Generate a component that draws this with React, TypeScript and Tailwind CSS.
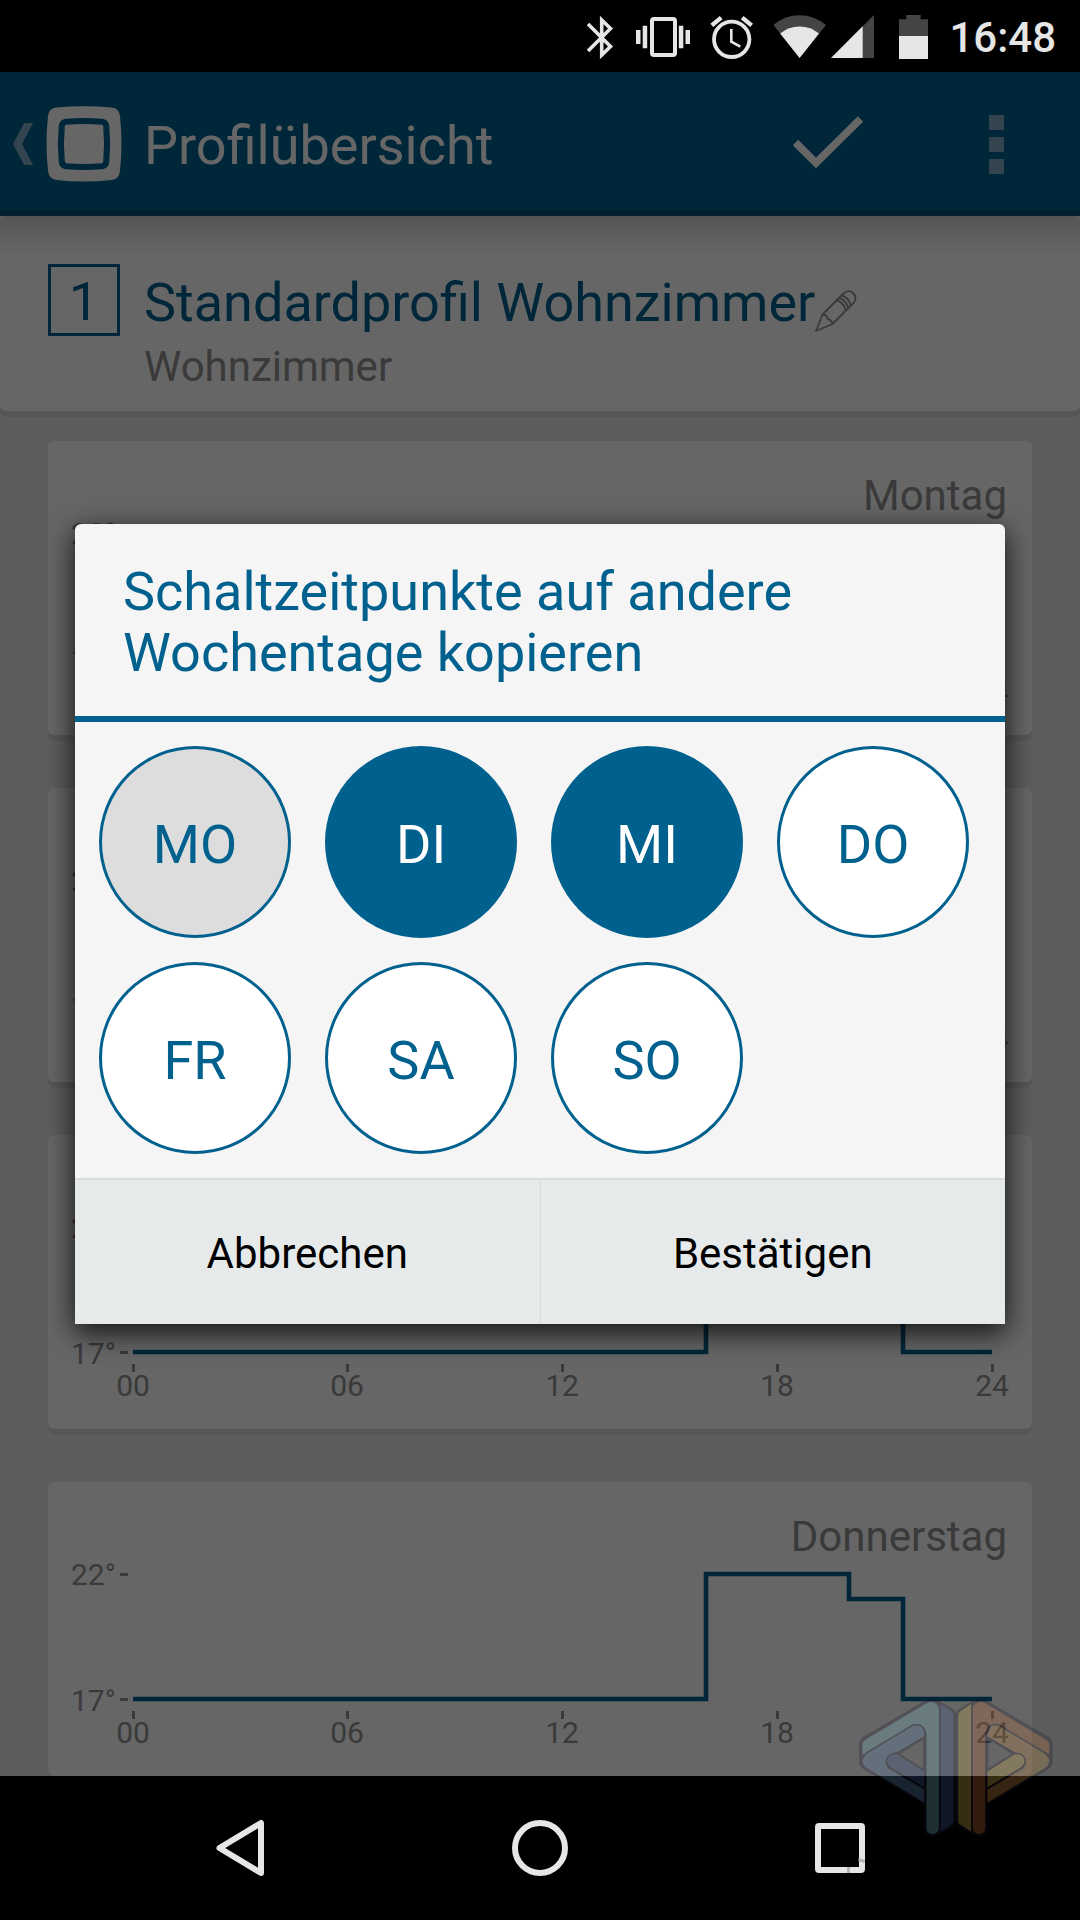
import { useState } from "react";
import clsx from "clsx";

const days = ["Montag", "Dienstag", "Mittwoch", "Donnerstag"];
const weekdays = ["MO", "DI", "MI", "DO", "FR", "SA", "SO"];

// Time axis labels and their centre in the chart
const hours = [
  { label: "00", x: 85 },
  { label: "06", x: 299 },
  { label: "12", x: 514 },
  { label: "18", x: 729 },
  { label: "24", x: 944 },
];

function StatusBar() {
  return (
    <div className="flex h-[72px] items-center justify-end gap-5 bg-black pt-0.5 pr-6 text-[#e6e6e6]">
      {/* Bluetooth */}
      <svg width="32" height="48" viewBox="0 0 32 48" fill="none" stroke="currentColor" strokeWidth="3.6">
        <path d="M4 11 26.5 33.5 17.7 42V7L26.5 15.5 4 38" />
      </svg>
      {/* Vibrate */}
      <svg width="54" height="48" viewBox="0 0 54 48" fill="currentColor">
        <rect x="16" y="6" width="23" height="36" rx="2" fill="none" stroke="currentColor" strokeWidth="4" />
        <path d="M0 17h4.5v14H0zM6.7 12.7h4.5v22.6H6.7zM42.8 12.7h4.5v22.6h-4.5zM49.5 17H54v14h-4.5z" />
      </svg>
      {/* Alarm */}
      <svg width="44" height="48" viewBox="0 0 44 48" fill="none" stroke="currentColor">
        <circle cx="21.7" cy="26.3" r="17.7" strokeWidth="3.8" />
        <path d="M21.3 16v12.7l9 5" strokeWidth="2.6" />
        <path d="M1.8 12.4 11.2 4.6M32.2 4.6l9.4 7.8" strokeWidth="4.4" />
      </svg>
      <div className="flex gap-1">
        {/* Wifi */}
        <svg width="52" height="48" viewBox="0 0 52 48" fill="currentColor">
          <path d="M-.5 12Q11 2.2 25.6 2.2T52 12L25.6 45z" fill="#444" />
          <path d="M6.2 20.5Q14.6 13.5 25.6 13.5T45 20.5L25.6 45z" />
        </svg>
        {/* Signal */}
        <svg width="48" height="48" viewBox="0 0 48 48" fill="currentColor">
          <path d="M1 45 44 2v43z" fill="#444" />
          <path d="M1 45 32.7 13.3V45z" />
        </svg>
      </div>
      {/* Battery */}
      <svg width="31" height="48" viewBox="0 0 31 48" fill="currentColor">
        <path d="M1 6.3h7.3V2h14.4v4.3H30V24H1z" fill="#444" />
        <path d="M1 23h29v23H1z" />
      </svg>
      <span className="pt-0.5 text-[42px] leading-[48px] font-medium">16:48</span>
    </div>
  );
}

function ActionBar() {
  return (
    <header className="flex h-36 items-center border-b-6 border-[#005078] bg-[#00618f] pt-1.5">
      <button aria-label="Zurück" className="mr-5 flex w-[124px] items-center justify-end gap-[13px] pr-0.5">
        <svg width="20" height="42" viewBox="0 0 20 42" fill="#80aac3">
          <path d="M11 0h9L9 21l11 21h-9L0 21z" />
        </svg>
        <svg width="76" height="76" viewBox="0 0 75 75">
          <path
            d="M10 1.500Q37-1 65 1.500q7 .8 8 8Q76 37 73 64.500q-1 8-8 8.500Q37 76 10 73q-7-.8-8-8.500Q-1 37 2 9.500q.8-7 8-8z"
            fill="#fff"
          />
          <path
            d="M20 15.500q17.500-1.500 35 0 4 .3 4.500 4.500 1.500 17.500 0 35-.4 4-4.500 4.500-17.500 1.500-35 0-4-.3-4.500-4.500-1.500-17.500 0-35 .4-4 4.500-4.500z"
            fill="#fff"
            stroke="#00618f"
            strokeWidth="6"
          />
        </svg>
      </button>
      <h1 className="flex-1 pt-1 text-[54px] leading-[66px] text-white">Profilübersicht</h1>
      <button aria-label="Speichern" className="flex w-[168px] justify-center">
        <svg width="72" height="56" viewBox="0 0 72 56" fill="none" stroke="#fff" strokeWidth="7.5">
          <path d="M3.500 26.500 24 47 68.500 3" />
        </svg>
      </button>
      <button aria-label="Weitere Optionen" className="flex w-[168px] flex-col items-center gap-[7px]">
        <span className="size-[15px] bg-[#80aac3]" />
        <span className="size-[15px] bg-[#80aac3]" />
        <span className="size-[15px] bg-[#80aac3]" />
      </button>
    </header>
  );
}

function ProfileHeader() {
  return (
    <section className="flex gap-6 rounded-[6px] bg-linear-to-b from-[#d4d4d4] to-white to-20% px-12 pt-12 pb-5 shadow-[0_6px_0_#d8d8d8]">
      <span className="flex size-[72px] items-center justify-center border-3 border-[#00618f] pt-1 text-[54px] leading-[66px] text-[#00618f]">
        1
      </span>
      <div className="pt-1.5">
        <div className="flex items-end">
          <h2 className="text-[54px] leading-[66px] text-[#00618f]">Standardprofil Wohnzimmer</h2>
          <button aria-label="Profil umbenennen" className="pb-1">
            <svg width="42" height="42" viewBox="0 0 42 42" fill="none" stroke="#919191" strokeWidth="1.8" strokeLinejoin="round">
              <path d="M1 41 7.500 24.500 28.500 3.500q5-4.500 9.500-.5t1 9.500L17.500 34z" />
              <path d="M7.500 24.500q4.500 0 5 4.500 4 .5 5 5M21.500 10.500q7 1.500 9 9.500M24 8q7 1.500 9 9.500M26.500 5.500q7 1.500 9 9.500" />
            </svg>
          </button>
        </div>
        <p className="mt-[7px] text-[42px] leading-[48px] text-[#919191]">Wohnzimmer</p>
      </div>
    </section>
  );
}

function DayCard({ day }: { day: string }) {
  return (
    <article className="rounded-[6px] bg-white pt-[30px] text-[#919191] shadow-[0_6px_0_#d8d8d8]">
      <h3 className="px-[25px] text-right text-[42px] leading-[50px]">{day}</h3>
      <svg viewBox="0 0 984 214" className="block w-full text-[30px]" fill="currentColor">
        <text x="23" y="23">22°</text>
        <text x="23" y="149">17°</text>
        <path d="M72 11h8v3h-8zM72 136h8v3h-8z" />
        {hours.map(({ label, x }) => (
          <g key={label}>
            <rect x={x - 1} y="149" width="3" height="8" />
            <text x={x} y="181" textAnchor="middle">
              {label}
            </text>
          </g>
        ))}
        <path d="M85 137H658V12H801V37H855V137H944" fill="none" stroke="#00618f" strokeWidth="4.600" />
      </svg>
    </article>
  );
}

function CopyDialog() {
  const [selected, setSelected] = useState(["DI", "MI"]);

  const toggle = (day: string) =>
    setSelected((prev) => (prev.includes(day) ? prev.filter((d) => d !== day) : [...prev, day]));

  return (
    <div
      role="dialog"
      aria-labelledby="dialog-title"
      className="w-full overflow-hidden rounded-t-[6px] bg-[#f5f5f5] shadow-[0_8px_28px_1px_rgba(0,0,0,0.8)]"
    >
      <h2
        id="dialog-title"
        className="border-b-6 border-[#00618f] px-12 pt-[37px] pb-[33px] text-[54px] leading-[61px] text-[#00618f]"
      >
        Schaltzeitpunkte auf andere Wochentage kopieren
      </h2>
      <div className="grid grid-cols-[repeat(auto-fill,192px)] gap-x-[34px] gap-y-6 p-6">
        {weekdays.map((day) => (
          <button
            key={day}
            disabled={day === "MO"}
            aria-pressed={selected.includes(day)}
            onClick={() => toggle(day)}
            className={clsx(
              "size-[192px] rounded-full border-3 border-[#00618f] pt-1.5 text-[54px] leading-[66px]",
              selected.includes(day) ? "bg-[#00618f] text-white" : "text-[#00618f]",
              day === "MO" && "bg-[#ddd]",
              day !== "MO" && !selected.includes(day) && "bg-white"
            )}
          >
            {day}
          </button>
        ))}
      </div>
      <div className="flex border-t-2 border-[#dadcdc] bg-[#e6eaeb] text-[42px] leading-[48px] text-black">
        <button className="h-36 flex-1 border-r border-[#d6dada] pt-1">Abbrechen</button>
        <button className="h-36 flex-1 pt-1">Bestätigen</button>
      </div>
    </div>
  );
}

function NavBar() {
  return (
    <nav className="flex h-36 items-center bg-black px-[90px]">
      <button aria-label="Zurück" className="flex flex-1 justify-center">
        <svg width="50" height="58" viewBox="0 0 50 58" fill="none" stroke="#e6e6e6" strokeWidth="6" strokeLinejoin="round">
          <path d="M46 4v50L4.500 29z" />
        </svg>
      </button>
      <button aria-label="Startseite" className="flex flex-1 justify-center">
        <svg width="58" height="58" viewBox="0 0 58 58" fill="none" stroke="#e6e6e6" strokeWidth="6">
          <circle cx="29" cy="29" r="25" />
        </svg>
      </button>
      <button aria-label="Übersicht" className="flex flex-1 justify-center">
        <svg width="50" height="50" viewBox="0 0 50 50" fill="none">
          <rect x="3" y="3" width="44" height="44" rx="1" stroke="#e6e6e6" strokeWidth="6" />
          <path d="M33.500 44v6M43.500 37q4-.5 6 2" stroke="#b4b4b4" strokeWidth="3" />
        </svg>
      </button>
    </nav>
  );
}

function LogoHalf({ light, mid, dark, side }: { light: string; mid: string; dark: string; side: string }) {
  return (
    <g stroke="#1a1428" strokeWidth="4" strokeLinejoin="round">
      <path
        d="M58 190Q58 178 70 170L258 60Q272 52 290 60L338 88Q346 94 346 105V425Q346 432 338 437L290 463Q277 470 262 463 254 458 254 447V372L70 264Q58 256 58 244ZM175 220 251 268V172Z"
        fill="#1a1428"
        fillRule="evenodd"
      />
      <path d="M299 66 335 90Q342 95 342 105V424Q342 430 335 434L299 457Z" fill={side} />
      <path d="M64 226V192Q65 182 74 176L258 66Q272 58 288 67 298 74 298 86V443Q297 462 277 463 257 462 257 443V160Q252 128 220 133Z" fill={light} />
      <path d="M64 242Q65 230 78 218L215 135Q248 124 254 158V168L172 216 152 222Q128 238 145 262L254 326V370L78 264Q66 256 64 242Z" fill={mid} />
      <path d="M172 220 254 272V324L150 262Q130 246 145 226 155 216 172 220Z" fill={dark} />
    </g>
  );
}

function Watermark() {
  return (
    <svg
      width="198"
      height="142"
      viewBox="50 50 595 425"
      className="pointer-events-none absolute right-[25px] bottom-[81px] opacity-25"
    >
      <LogoHalf light="#7cc0d4" mid="#608cbe" dark="#3c5896" side="#3c5896" />
      <g transform="translate(694 0) scale(-1 1)">
        <LogoHalf light="#c86e3c" mid="#cd9146" dark="#dcb44b" side="#dcb44b" />
      </g>
    </svg>
  );
}

export default function App() {
  return (
    <div className="relative flex h-screen flex-col overflow-hidden font-[Roboto,sans-serif]">
      <StatusBar />
      <main className="relative min-h-0 flex-1 overflow-hidden bg-[#e4ebe6]">
        <ActionBar />
        <ProfileHeader />
        <div className="flex flex-col gap-[53px] px-12 pt-[30px]">
          {days.map((day) => (
            <DayCard key={day} day={day} />
          ))}
        </div>

        {/* Scrim and dialog */}
        <div className="absolute inset-0 flex items-center justify-center bg-black/60 px-[75px]">
          <CopyDialog />
        </div>
      </main>
      <NavBar />
      <Watermark />
    </div>
  );
}
